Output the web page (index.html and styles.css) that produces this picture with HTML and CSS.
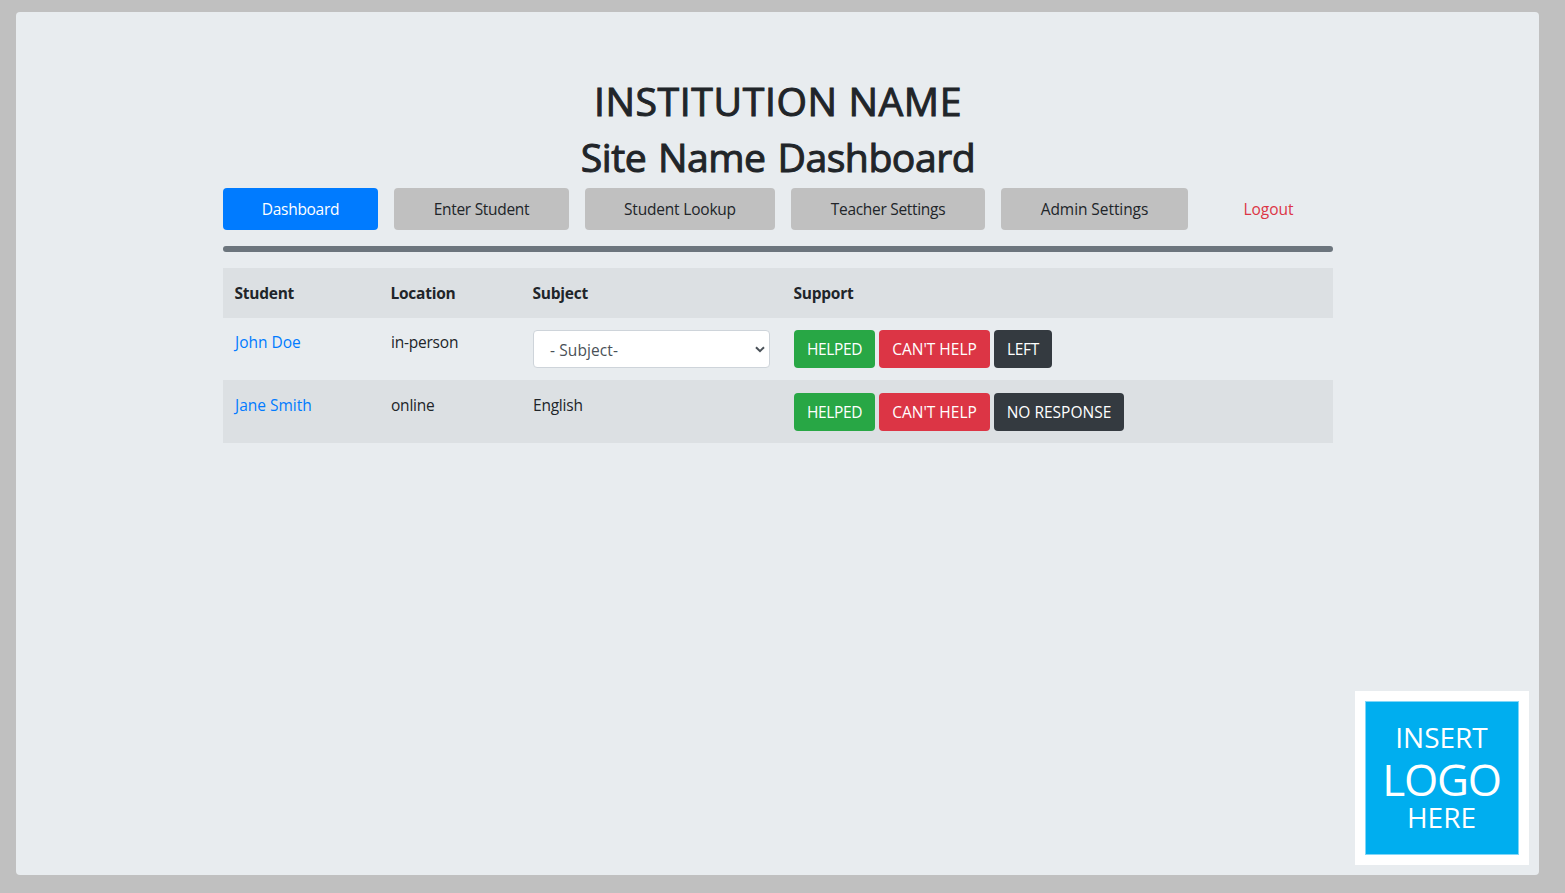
FILE: index.html
```html
<!DOCTYPE html>
<html lang="en">
<head>
<meta charset="utf-8">
<title>Site Name Dashboard</title>
<link rel="stylesheet" href="styles.css">
</head>
<body>
<main class="panel">
  <div class="container">
    <h1 class="title title-upper">INSTITUTION NAME</h1>
    <h1 class="title title-site">Site Name Dashboard</h1>
    <nav class="nav">
      <a class="nav-link active">Dashboard</a>
      <a class="nav-link">Enter Student</a>
      <a class="nav-link lookup">Student Lookup</a>
      <a class="nav-link">Teacher Settings</a>
      <a class="nav-link admin">Admin Settings</a>
      <a class="nav-link logout">Logout</a>
    </nav>
    <div class="rule"></div>
    <div class="table">
      <div class="row row-head">
        <div class="cell">Student</div><div class="cell">Location</div><div class="cell">Subject</div><div class="cell">Support</div>
      </div>
      <div class="row row-first">
        <div class="cell"><a class="link">John Doe</a></div>
        <div class="cell tight">in-person</div>
        <div class="cell">
          <div class="select"><span class="select-text">- Subject-</span>
            <svg class="chevron" width="10" height="7" viewBox="0 0 10 7"><path d="M1 1.2L5 5.2L9 1.2" fill="none" stroke="#495057" stroke-width="2"/></svg>
          </div>
        </div>
        <div class="cell buttons">
          <button class="btn green">HELPED</button><button class="btn red">CAN'T HELP</button><button class="btn dark left">LEFT</button>
        </div>
      </div>
      <div class="row row-second">
        <div class="cell"><a class="link">Jane Smith</a></div>
        <div class="cell tight">online</div>
        <div class="cell tight">English</div>
        <div class="cell buttons">
          <button class="btn green">HELPED</button><button class="btn red">CAN'T HELP</button><button class="btn dark noresp">NO RESPONSE</button>
        </div>
      </div>
    </div>
  </div>
  <div class="logo">
    <div class="logo-box">
      <span class="logo-small">INSERT</span>
      <span class="logo-big">LOGO</span>
      <span class="logo-small logo-here">HERE</span>
    </div>
  </div>
</main>
</body>
</html>
```
FILE: styles.css
```css
* { box-sizing: border-box; }
body {
  margin: 0;
  height: 893px;
  padding: 12px 26px 18px 16px;
  background: #c0c0c0;
  color: #212529;
  font: 400 15.5px/24px "Open Sans", "Noto Sans", sans-serif;
  overflow: hidden;
}
.panel {
  display: flex;
  flex-direction: column;
  justify-content: space-between;
  height: 863px;
  padding: 64px 10px 10px;
  background: #e8ecef;
  border-radius: 4px;
}
.container { width: 1110px; margin-left: 197px; }
.title {
  height: 48px;
  margin: 0 0 8px;
  font-size: 39.2px;
  line-height: 50px;
  font-weight: 400;
  text-align: center;
  white-space: nowrap;
  -webkit-text-stroke: 1px #212529;
}
.title-upper { letter-spacing: 0.6px; }
.title-site { letter-spacing: -0.5px; word-spacing: 2.2px; }
.nav { display: grid; grid-template-columns: 155px 175px 190px 194px 187px 129px; gap: 16px; height: 42px; }
.nav-link {
  padding-top: 9px;
  border-radius: 4px;
  background: #c0c0c0;
  text-align: center;
  white-space: nowrap;
  letter-spacing: -0.3px;
}
.nav-link.lookup { letter-spacing: -0.2px; }
.nav-link.admin { letter-spacing: -0.07px; }
.nav-link.active { background: #007bff; color: #fff; }
.nav-link.logout { background: none; color: #dc3545; letter-spacing: 0; }
.rule { height: 6px; margin: 16px 0; border-radius: 3px; background: #6c757d; }
.row { display: grid; grid-template-columns: 156px 142px 261px 551px; }
.cell { padding: 12px 12px 0; white-space: nowrap; }
.tight { letter-spacing: -0.22px; }
.row-head { height: 50px; background: #dce0e3; font-weight: 700; letter-spacing: -0.25px; }
.row-head .cell { padding: 13px 0 0 11.5px; }
.row-first { height: 62px; }
.row-second { height: 63px; background: #dce0e3; }
.row-second .cell { padding-top: 13px; }
.link { color: #007bff; }
.select {
  display: flex;
  align-items: center;
  justify-content: space-between;
  height: 38px;
  padding: 2px 4px 0 16px;
  border: 1px solid #ced4da;
  border-radius: 4px;
  background: #fff;
  color: #495057;
}
.select-text { letter-spacing: 0.1px; }
.chevron { margin-bottom: 1px; }
.buttons { display: flex; gap: 4px; }
.btn {
  height: 38px;
  padding: 0;
  border: 0;
  border-radius: 4px;
  color: #fff;
  font: inherit;
  line-height: 24px;
  white-space: nowrap;
}
.green { width: 81px; background: #28a745; letter-spacing: -0.35px; }
.red { width: 111px; background: #dc3545; }
.dark { background: #343a40; }
.left { width: 58px; letter-spacing: -0.3px; }
.noresp { width: 130px; }
.logo { align-self: flex-end; width: 174px; height: 174px; padding: 10px; background: #fff; }
.logo-box {
  display: flex;
  flex-direction: column;
  align-items: center;
  height: 154px;
  padding: 18px 1px 0 0;
  border: 1px solid #80d6f7;
  background: #00aeef;
  color: #fff;
}
.logo-small { font-size: 28px; line-height: 34px; }
.logo-big { font-size: 44px; line-height: 51px; letter-spacing: -1.2px; }
.logo-here { line-height: 24px; }
```
